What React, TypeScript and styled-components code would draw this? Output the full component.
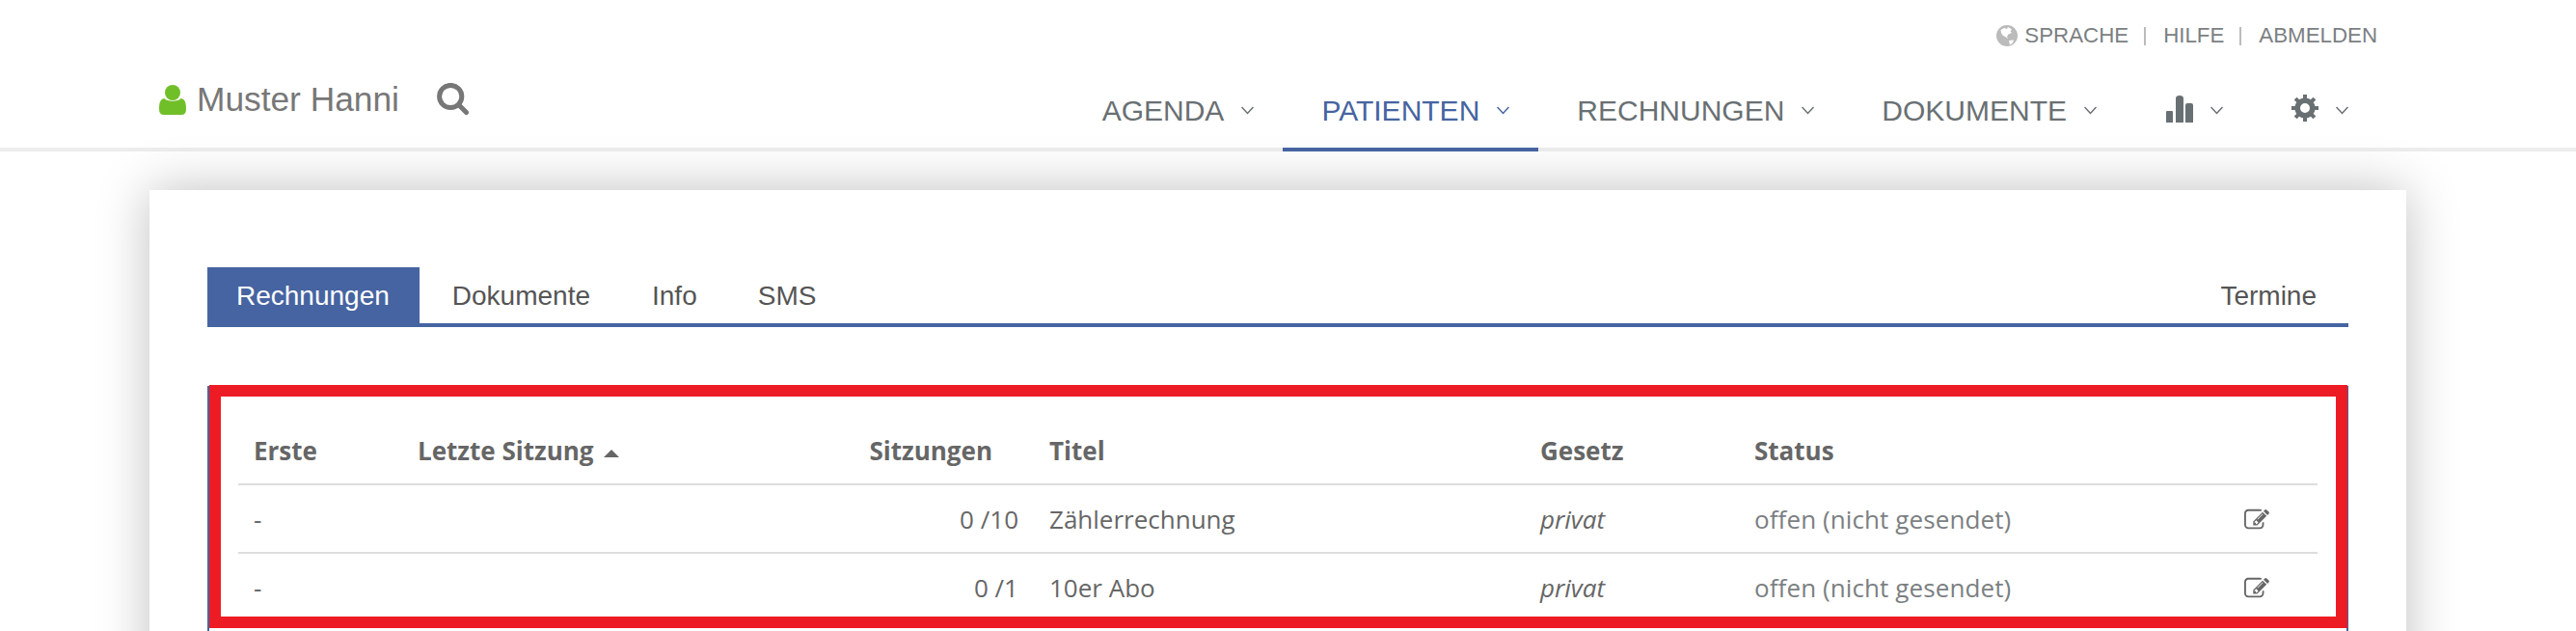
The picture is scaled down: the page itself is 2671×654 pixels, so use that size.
import React from "react";
import styled, {createGlobalStyle} from "styled-components";

const GlobalStyle = createGlobalStyle`
  * {
    box-sizing: border-box;
  }

  body {
    margin: 0;
    background: #fff;
    font-family: "Liberation Sans", Arial, sans-serif;
  }
`

const Page = styled.div`
  height: 654px;
  overflow: hidden;
`

const Header = styled.header`
  display: flex;
  justify-content: space-between;
  height: 157px;
  padding: 0 206px 0 165px;
  border-bottom: 4px solid #ededed;
`

const Patient = styled.div`
  display: flex;
  align-items: center;
  height: 36px;
  margin-top: 85px;
  color: #777;
  font-size: 35.3px;
`

const PatientName = styled.span`
  margin: 0 39px 0 11px;
  white-space: nowrap;
`

const HeaderRight = styled.div`
  display: flex;
  flex-direction: column;
  justify-content: space-between;
  align-items: flex-end;
`

const MetaNav = styled.div`
  display: flex;
  align-items: center;
  height: 30px;
  margin-top: 22px;
  color: #7b7f82;
  font-size: 22.3px;
`

const MetaItem = styled.a`
  display: flex;
  align-items: center;
  gap: 7px;
`

const MetaDivider = styled.span`
  width: 2px;
  height: 19px;
  margin: 0 18px 0 16px;
  background: #bbb;
`

const MainNav = styled.nav`
  display: flex;
  align-items: stretch;
  height: 84px;
  margin-bottom: -4px;
`

const NavItem = styled.a<{ $active?: boolean, $offset?: number }>`
  display: flex;
  align-items: center;
  gap: 18px;
  margin-left: ${props => props.$offset ?? 0}px;
  padding: 3px 30px 0 40px;
  border-bottom: 4px solid ${props => props.$active ? '#4664a1' : 'transparent'};
  color: ${props => props.$active ? '#4664a1' : '#697073'};
  font-size: 30px;
`

const NavIcon = styled.span<{ $lift: number }>`
  display: flex;
  margin-bottom: ${props => props.$lift}px;
`

const Card = styled.main`
  width: 2340px;
  height: 600px;
  margin: 40px 0 0 155px;
  padding: 80px 60px 0;
  background: #fff;
  box-shadow: 0 0 50px rgba(0, 0, 0, 0.25);
`

const Tabs = styled.div`
  display: flex;
  height: 62px;
  border-bottom: 4px solid #4664a1;
`

const Tab = styled.a<{ $active?: boolean, $right?: boolean, $offset?: number }>`
  height: 58px;
  padding: 0 ${props => props.$right ? '33px' : '31px'} 0 30px;
  margin-left: ${props => props.$right ? 'auto' : `${props.$offset ?? 0}px`};
  background: ${props => props.$active ? '#4664a1' : 'transparent'};
  color: ${props => props.$active ? '#fff' : '#555'};
  font-size: 28px;
  line-height: 60px;
`

const Panel = styled.section`
  display: flex;
  height: 300px;
  margin-top: 61px;
  border: 2px solid #4664a1;
`

const Highlight = styled.div`
  flex: none;
  width: 2217px;
  height: 252px;
  margin-top: -3px;
  padding: 31px 19px 0 18px;
  border: 12px solid #ed1c24;
  background: #fff;
`

const Table = styled.div`
  font-family: "Open Sans", sans-serif;
  font-size: 26px;
  color: #666;
`

const Row = styled.div<{ $head?: boolean }>`
  display: grid;
  grid-template-columns: 170px 446px 209px 509px 222px 508px 1fr;
  align-items: center;
  height: ${props => props.$head ? '61px' : '71px'};
  padding: 0 0 ${props => props.$head ? '10px' : '0'} 16px;
  border-bottom: 2px solid #ddd;
  font-weight: ${props => props.$head ? 700 : 400};

  &:last-child {
    border-bottom-color: transparent;
  }
`

const Cell = styled.div<{ $right?: boolean, $italic?: boolean, $muted?: boolean, $indent?: number }>`
  display: flex;
  align-items: center;
  justify-content: ${props => props.$right ? 'flex-end' : 'flex-start'};
  padding-right: ${props => props.$indent ?? 0}px;
  font-style: ${props => props.$italic ? 'italic' : 'normal'};
  color: ${props => props.$muted ? '#7b7f82' : 'inherit'};
  letter-spacing: ${props => props.$muted ? '0.1px' : 'normal'};
  white-space: nowrap;
`

const SortArrow = styled.span`
  margin: 7px 0 0 10px;
  border: 8px solid transparent;
  border-top: none;
  border-bottom-color: #666;
`

const UserIcon = () => (
  <svg width="28" height="31" viewBox="0 0 28 31" fill="#70bf29">
    <circle cx="14" cy="8" r="8"/>
    <path d="M5.5 14C8 17.6 20 17.6 22.5 14C26.5 14.5 28 18 28 25Q28 31 23 31H5Q0 31 0 25C0 18 1.5 14.5 5.5 14Z"/>
  </svg>
)

const SearchIcon = () => (
  <svg width="34" height="34" viewBox="0 0 34 34" fill="none" stroke="#777">
    <circle cx="14.2" cy="14" r="11.6" strokeWidth="5"/>
    <path d="M22.5 22.5L30.5 30.5" strokeWidth="5" strokeLinecap="round"/>
  </svg>
)

const GlobeIcon = () => (
  <svg width="22" height="22" viewBox="0 0 22 22">
    <circle cx="11" cy="11" r="11" fill="#bbb"/>
    <path d="M4.5 5L8 3L11 4L12 2L16 4.5L14.5 6.5L16 8L12.5 9.5L11 12L12 14L9 12L6.5 10.5L5 8ZM13 16L18 15.5L17 18.5L14 20.5Z" fill="#fff"/>
  </svg>
)

const ChartIcon = () => (
  <svg width="28" height="28" viewBox="0 0 28 28" fill="currentColor">
    <path d="M0 28V17Q0 16 1 16H6Q7 16 7 17V28ZM10 28V3Q10 0 14 0Q18 0 18 3V28ZM20 28V10Q20 8 22 8H26Q28 8 28 10V28Z"/>
  </svg>
)

const GearIcon = () => (
  <svg width="28" height="28" viewBox="0 0 28 28">
    <circle cx="14" cy="14" r="7.8" fill="none" stroke="currentColor" strokeWidth="5.6"/>
    {[0, 45, 90, 135, 180, 225, 270, 315].map(angle => (
      <path key={angle} d="M12 5V0H16V5Z" fill="currentColor" transform={`rotate(${angle} 14 14)`}/>
    ))}
  </svg>
)

const Chevron = () => (
  <svg width="13" height="9" viewBox="0 0 13 9" fill="none" stroke="currentColor" strokeWidth="1.5">
    <path d="M0.5 1L6.5 7.5L12.5 1"/>
  </svg>
)

const EditGlyph = styled.svg`
  width: 26px;
  height: 26px;
  margin-top: 3px;
  fill: currentColor;
`

const EditIcon = () => (
  <EditGlyph viewBox="0 0 1792 1792">
    <path d="M888 1184l116-116-152-152-116 116v56h96v96h56zm440-720q-16-16-33 1l-350 350q-17 17-1 33t33-1l350-350q17-17 1-33zm80 594v190q0 119-84.5 203.5t-203.5 84.5h-832q-119 0-203.5-84.5t-84.5-203.5v-832q0-119 84.5-203.5t203.5-84.5h832q63 0 117 25 15 7 18 23 3 17-9 29l-49 49q-14 14-32 8-23-6-45-6h-832q-66 0-113 47t-47 113v832q0 66 47 113t113 47h832q66 0 113-47t47-113v-126q0-13 9-22l64-64q15-15 35-7t20 29zm-96-738l288 288-672 672h-288v-288zm444 132l-92 92-288-288 92-92q28-28 68-28t68 28l152 152q28 28 28 68t-28 68z"/>
  </EditGlyph>
)

const navItems = [
  {label: 'AGENDA'},
  {label: 'PATIENTEN', active: true},
  {label: 'RECHNUNGEN'},
  {label: 'DOKUMENTE'},
]

const rows = [
  {sessions: '0 /10', title: 'Zählerrechnung'},
  {sessions: '0 /1', title: '10er Abo'},
]

const App: React.FC = () => {
  return(
    <Page>
      <GlobalStyle/>
      <Header>
        <Patient>
          <UserIcon/>
          <PatientName>Muster Hanni</PatientName>
          <SearchIcon/>
        </Patient>
        <HeaderRight>
          <MetaNav>
            <MetaItem><GlobeIcon/>SPRACHE</MetaItem>
            <MetaDivider/>
            <MetaItem>HILFE</MetaItem>
            <MetaDivider/>
            <MetaItem>ABMELDEN</MetaItem>
          </MetaNav>
          <MainNav>
            {navItems.map(item => (
              <NavItem key={item.label} $active={item.active}>
                {item.label}
                <Chevron/>
              </NavItem>
            ))}
            <NavItem $offset={2}>
              <NavIcon $lift={3}><ChartIcon/></NavIcon>
              <Chevron/>
            </NavItem>
            <NavItem $offset={1}>
              <NavIcon $lift={5}><GearIcon/></NavIcon>
              <Chevron/>
            </NavItem>
          </MainNav>
        </HeaderRight>
      </Header>
      <Card>
        <Tabs>
          <Tab $active>Rechnungen</Tab>
          <Tab $offset={4}>Dokumente</Tab>
          <Tab $offset={3}>Info</Tab>
          <Tab $offset={2}>SMS</Tab>
          <Tab $right>Termine</Tab>
        </Tabs>
        <Panel>
          <Highlight>
            <Table>
              <Row $head>
                <Cell>Erste</Cell>
                <Cell>Letzte Sitzung<SortArrow/></Cell>
                <Cell $right $indent={59}>Sitzungen</Cell>
                <Cell>Titel</Cell>
                <Cell>Gesetz</Cell>
                <Cell>Status</Cell>
              </Row>
              {rows.map(row => (
                <Row key={row.title}>
                  <Cell>-</Cell>
                  <Cell/>
                  <Cell $right $indent={32}>{row.sessions}</Cell>
                  <Cell>{row.title}</Cell>
                  <Cell $italic>privat</Cell>
                  <Cell $muted>offen (nicht gesendet)</Cell>
                  <Cell><EditIcon/></Cell>
                </Row>
              ))}
            </Table>
          </Highlight>
        </Panel>
      </Card>
    </Page>
  )
}

export default App
